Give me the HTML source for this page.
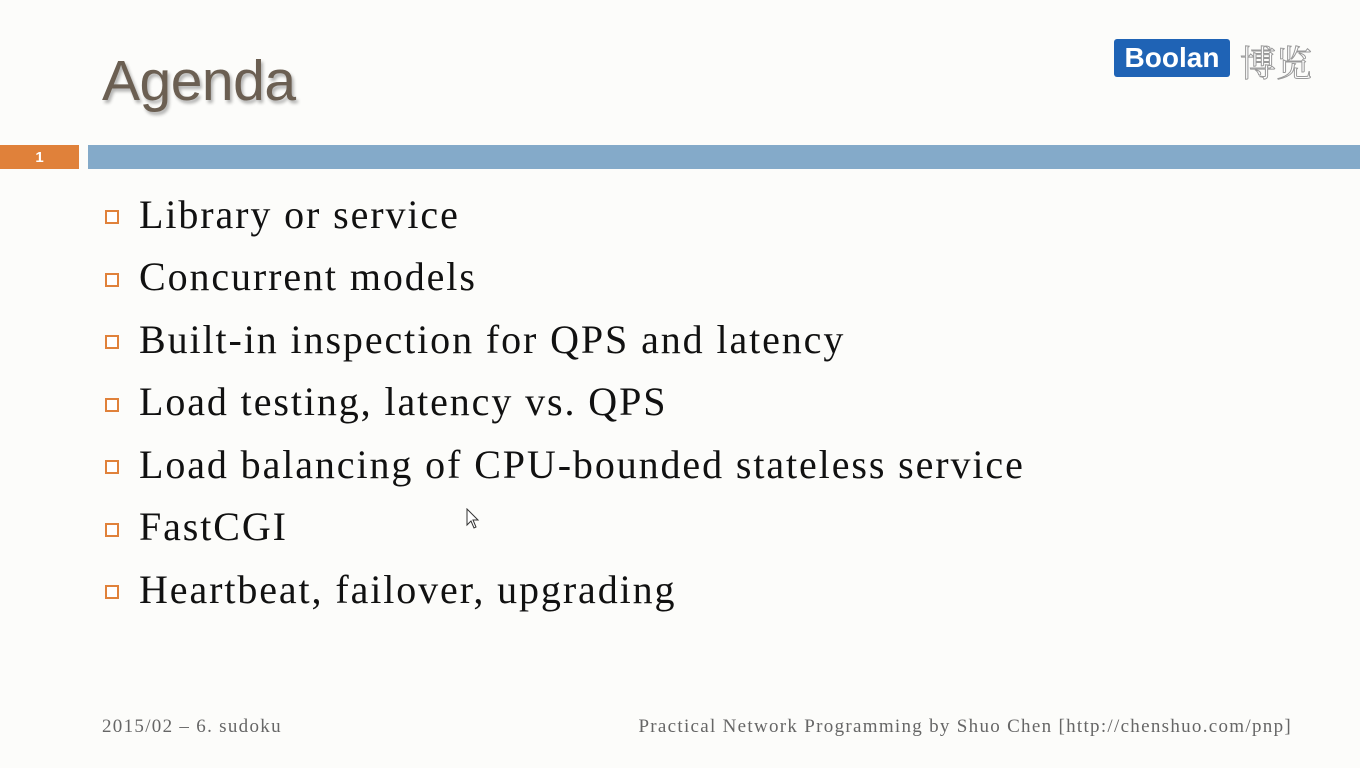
<!DOCTYPE html>
<html><head><meta charset="utf-8"><style>
html,body{margin:0;padding:0}
body{width:1360px;height:768px;background:#fcfcfa;position:relative;overflow:hidden;font-family:"Liberation Serif",serif}
.title{position:absolute;left:102px;top:48px;font-family:"Liberation Sans",sans-serif;font-size:57px;color:#6b5f52;text-shadow:2px 3px 3px rgba(0,0,0,0.3);letter-spacing:-0.5px}
.num{position:absolute;left:0;top:145px;width:79px;height:24px;background:#e0813a;color:#fff;font:bold 15px "Liberation Sans",sans-serif;text-align:center;line-height:25px}
.bar{position:absolute;left:88px;top:145px;right:0;height:24px;background:#84aac9}
.logo{position:absolute;left:1114px;top:39px;width:116px;height:38px;background:#1f63b5;border-radius:3px;color:#fff;font:bold 28px "Liberation Sans",sans-serif;text-align:center;line-height:38px}
.cjk{position:absolute;left:1240px;top:36px;font:36px "Noto Serif CJK SC",serif;color:#fff;-webkit-text-stroke:1px #999}
.item{position:absolute;left:139px;font-size:40px;color:#111;line-height:40px;letter-spacing:1.9px;white-space:nowrap}
.box{position:absolute;left:105px;width:14px;height:14px;border:2px solid #e0813a;box-sizing:border-box;background:#fff}
.foot{position:absolute;top:716px;font-size:19px;color:#666;letter-spacing:1.3px;white-space:nowrap}
</style></head><body>
<div class="title">Agenda</div>
<div class="logo">Boolan</div>
<div class="cjk">博览</div>
<div class="num">1</div>
<div class="bar"></div>
<div class="box" style="top:210px"></div><div class="item" style="top:195px">Library or service</div>
<div class="box" style="top:273px"></div><div class="item" style="top:257px">Concurrent models</div>
<div class="box" style="top:335px"></div><div class="item" style="top:320px">Built-in inspection for QPS and latency</div>
<div class="box" style="top:398px"></div><div class="item" style="top:382px">Load testing, latency vs. QPS</div>
<div class="box" style="top:460px"></div><div class="item" style="top:445px">Load balancing of CPU-bounded stateless service</div>
<div class="box" style="top:523px"></div><div class="item" style="top:507px">FastCGI</div>
<div class="box" style="top:585px"></div><div class="item" style="top:570px">Heartbeat, failover, upgrading</div>
<svg style="position:absolute;left:466px;top:508px" width="14" height="22" viewBox="0 0 14 22"><path d="M1 1 L1 17 L5 13 L8 20 L10 19 L7 12 L12 12 Z" fill="#fff" stroke="#333" stroke-width="1"/></svg>
<div class="foot" style="left:102px">2015/02 – 6. sudoku</div>
<div class="foot" style="right:68px">Practical Network Programming by Shuo Chen [http://chenshuo.com/pnp]</div>
</body></html>
